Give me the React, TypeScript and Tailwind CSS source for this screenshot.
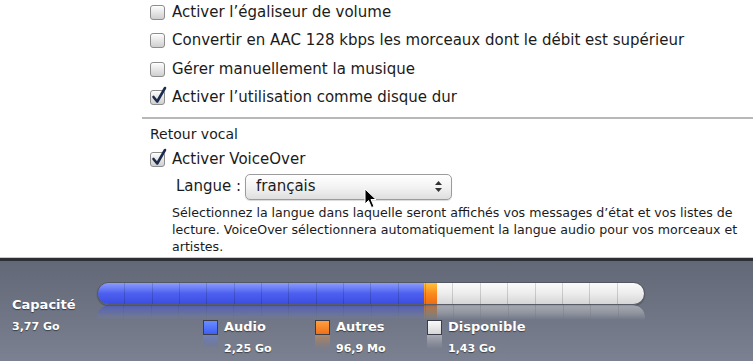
import React from 'react'

const font = { fontFamily: '"DejaVu Sans", "Liberation Sans", sans-serif' }

const Checkbox: React.FC<{ checked?: boolean }> = ({ checked }) => (
  <div className="relative w-[15px] h-[15px] shrink-0">
    <div className="absolute inset-0 rounded-[3px] border border-[#8d8d8d] bg-gradient-to-b from-[#fdfdfd] via-[#e6e6e6] to-[#cfcfcf] shadow-[inset_0_1px_0_#fff]" />
    {checked && (
      <svg className="absolute left-[1px] top-[-4px]" width="16" height="18" viewBox="0 0 16 18">
        <path d="M2.5 11 L6.2 15.5 L14 2" fill="none" stroke="#1d2c4e" strokeWidth="2.6" strokeLinecap="round" strokeLinejoin="round" />
      </svg>
    )}
  </div>
)

const Row: React.FC<{ checked?: boolean; children: React.ReactNode }> = ({ checked, children }) => (
  <div className="flex items-center gap-[7px] h-[24px]">
    <Checkbox checked={checked} />
    <span className="text-[15px] text-[#1b1b1b] leading-none">{children}</span>
  </div>
)

const Legend: React.FC<{ color: string; label: string; size: string }> = ({ color, label, size }) => (
  <div className="flex w-[112px] gap-[6px]">
    <div className="flex flex-col">
      <div className={`w-[15px] h-[15px] border border-[#3a3d48] ${color}`} />
      <div className={`w-[15px] h-[14px] opacity-40 ${color} [mask-image:linear-gradient(to_bottom,black,transparent)]`} />
    </div>
    <div className="flex flex-col text-white font-bold [text-shadow:0_1px_1px_rgba(0,0,0,0.5)]">
      <span className="text-[13px] leading-[16px] mt-[-1px]">{label}</span>
      <span className="text-[11px] leading-[14px] mt-[7px]">{size}</span>
    </div>
  </div>
)

const BarFill: React.FC = () => (
  <>
    <div className="w-[59.7%] bg-gradient-to-b from-[#8d9bfa] via-[#4d5ff1] to-[#3b4ee0]" />
    <div className="w-[2.4%] bg-gradient-to-b from-[#ffc13a] via-[#fb8a1c] to-[#ee6d12]" />
    <div className="flex-1 bg-gradient-to-b from-[#fbfbfb] via-[#ececec] to-[#d6d6d6]" />
  </>
)

const Dividers: React.FC = () => (
  <div className="absolute inset-0 flex">
    {Array.from({ length: 20 }).map((_, i) => (
      <div key={i} className={`flex-1 ${i < 19 ? 'border-r border-black/15' : ''}`} />
    ))}
  </div>
)

export default function App() {
  return (
    <div className="w-[753px] h-[361px] overflow-hidden bg-white flex flex-col relative" style={font}>
      {/* settings */}
      <div className="h-[257px] flex flex-col">
        <div className="flex flex-col gap-[4.5px] pl-[150px]">
          <Row>Activer l’égaliseur de volume</Row>
          <Row>Convertir en AAC 128 kbps les morceaux dont le débit est supérieur</Row>
          <Row>Gérer manuellement la musique</Row>
          <Row checked>Activer l’utilisation comme disque dur</Row>
        </div>
        <div className="ml-[142px] mt-[7px] h-[2px] bg-[#b8b8b8]" />
        <div className="pl-[150px] mt-[3px] text-[14px] text-[#1b1b1b] leading-[24px]">Retour vocal</div>
        <div className="pl-[150px] mt-[2px]">
          <Row checked>Activer VoiceOver</Row>
        </div>
        <div className="pl-[176px] mt-[2px] flex items-center">
          <span className="w-[69px] text-[15px] text-[#1b1b1b]">Langue :</span>
          <div className="w-[207px] h-[26px] rounded-[5px] border border-[#9b9b9b] bg-gradient-to-b from-white via-[#f3f3f3] to-[#dedede] shadow-[0_1px_1px_rgba(0,0,0,0.15)] flex items-center justify-between pl-[10px] pr-[9px]">
            <span className="text-[15px] text-[#1b1b1b]">français</span>
            <svg width="7" height="11" viewBox="0 0 7 11">
              <path d="M3.5 0 L7 4 L0 4 Z M0 7 L7 7 L3.5 11 Z" fill="#333" />
            </svg>
          </div>
        </div>
        <p className="pl-[172px] pr-[8px] mt-[4px] text-[12.6px] leading-[17px] text-[#1b1b1b]">
          Sélectionnez la langue dans laquelle seront affichés vos messages d’état et vos listes de lecture. VoiceOver sélectionnera automatiquement la langue audio pour vos morceaux et artistes.
        </p>
      </div>

      {/* capacity panel */}
      <div className="flex-1 border-t-[1px] border-[#c9c9c9]">
        <div className="h-full border-t-[3px] border-[#2b2e35] bg-gradient-to-b from-[#626876] via-[#6e7483] to-[#7c8191] flex">
          <div className="w-[97px] pl-[12px] pt-[35px] flex flex-col text-white font-bold [text-shadow:0_1px_1px_rgba(0,0,0,0.5)]">
            <span className="text-[13px] leading-[18px]">Capacité</span>
            <span className="text-[11px] leading-[14px] mt-[6px]">3,77 Go</span>
          </div>
          <div className="flex flex-col pt-[21px]">
            <div className="relative w-[548px] h-[23px] rounded-full overflow-hidden flex border border-black/20 shadow-[0_1px_1px_rgba(0,0,0,0.3)]">
              <BarFill />
              <Dividers />
            </div>
            <div className="relative w-[548px] h-[15px] rounded-b-[12px] overflow-hidden flex -scale-y-100 opacity-55 [mask-image:linear-gradient(to_top,black,transparent)]">
              <BarFill />
              <Dividers />
            </div>
            <div className="flex pl-[106px]">
              <Legend color="bg-gradient-to-b from-[#6b8cff] to-[#3d5ef5]" label="Audio" size="2,25 Go" />
              <Legend color="bg-gradient-to-b from-[#ffa040] to-[#f07012]" label="Autres" size="96,9 Mo" />
              <Legend color="bg-gradient-to-b from-[#fafafa] to-[#d6d6d6]" label="Disponible" size="1,43 Go" />
            </div>
          </div>
        </div>
      </div>

      {/* mouse pointer */}
      <svg className="absolute left-[364px] top-[188px]" width="14" height="21" viewBox="0 0 14 21">
        <path d="M1 1 L1 16 L4.5 12.5 L7.5 19.5 L10 18.5 L7 11.5 L12 11.5 Z" fill="#000" stroke="#fff" strokeWidth="1" strokeLinejoin="round" />
      </svg>
    </div>
  )
}
